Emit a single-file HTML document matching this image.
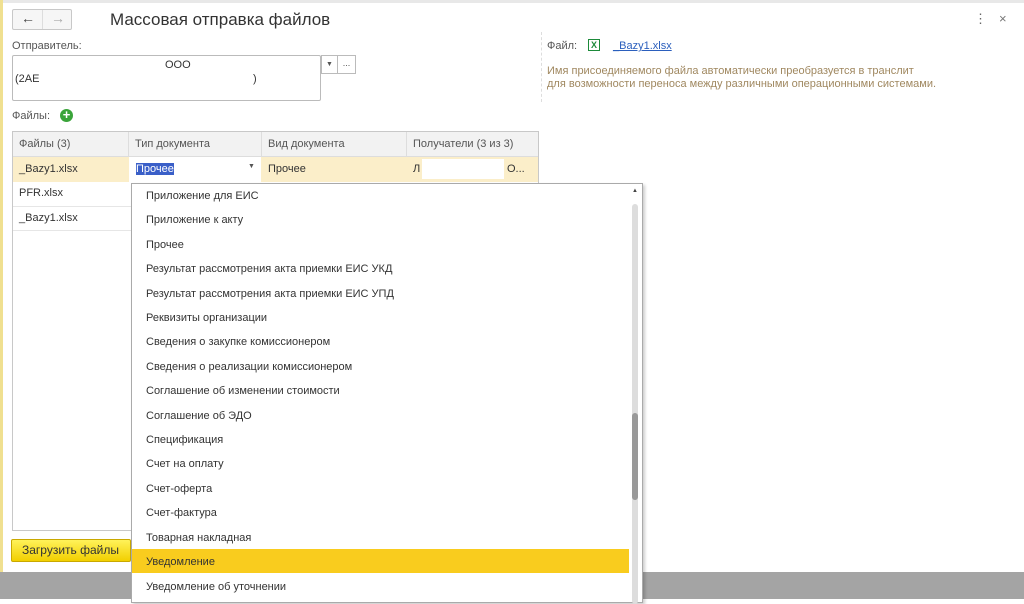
<!DOCTYPE html>
<html><head><meta charset="utf-8"><style>
*{margin:0;padding:0;box-sizing:border-box}
body{width:1024px;height:599px;overflow:hidden;background:#fff;font-family:"Liberation Sans",sans-serif;font-size:11px;color:#333;position:relative}
.a{position:absolute}
.t{position:absolute;white-space:nowrap}
</style></head><body>
<div class="a" style="left:0;top:0;width:1024px;height:3px;background:#e8e8e8"></div>
<div class="a" style="left:0;top:0;width:3px;height:572px;background:#f0e090"></div>
<div class="a" style="left:0;top:572px;width:1024px;height:27px;background:#a4a4a4"></div>
<div class="a" style="left:12px;top:9px;width:60px;height:21px;border:1px solid #c8c8c8;border-radius:2px;background:#f6f6f6"></div>
<div class="a" style="left:42px;top:10px;width:1px;height:19px;background:#ddd"></div>
<div class="t" style="left:21px;top:10px;font-size:14px;color:#444">&#8592;</div>
<div class="t" style="left:51px;top:10px;font-size:14px;color:#aaa">&#8594;</div>
<div class="t" style="left:110px;top:10px;font-size:17px;color:#333">Массовая отправка файлов</div>
<div class="t" style="left:974px;top:11px;font-size:13px;color:#666">&#8942;</div>
<div class="t" style="left:999px;top:11px;font-size:13px;color:#777">×</div>
<div class="t" style="left:12px;top:40px;color:#555">Отправитель:</div>
<div class="a" style="left:12px;top:55px;width:309px;height:46px;border:1px solid #bbb;border-radius:2px"></div>
<div class="t" style="left:165px;top:59px">ООО</div>
<div class="t" style="left:15px;top:73px">(2АЕ</div>
<div class="t" style="left:253px;top:73px">)</div>
<div class="a" style="left:321px;top:55px;width:17px;height:19px;border:1px solid #bbb;font-size:7px;text-align:center;line-height:17px;color:#555">▼</div>
<div class="a" style="left:337px;top:55px;width:19px;height:19px;border:1px solid #bbb;font-size:9px;text-align:center;line-height:15px;color:#555">...</div>
<div class="t" style="left:12px;top:110px;color:#555">Файлы:</div>
<div class="a" style="left:60px;top:109px;width:13px;height:13px;border-radius:50%;background:#3aa43a;color:#fff;font-size:13px;font-weight:bold;line-height:12px;text-align:center">+</div>
<div class="a" style="left:12px;top:131px;width:527px;height:400px;border:1px solid #c8c8c8"></div>
<div class="a" style="left:13px;top:132px;width:525px;height:25px;background:#f2f2f2;border-bottom:1px solid #ddd"></div>
<div class="a" style="left:128px;top:132px;width:1px;height:25px;background:#ddd"></div>
<div class="a" style="left:261px;top:132px;width:1px;height:25px;background:#ddd"></div>
<div class="a" style="left:406px;top:132px;width:1px;height:25px;background:#ddd"></div>
<div class="t" style="left:19px;top:138px;color:#555">Файлы (3)</div>
<div class="t" style="left:135px;top:138px;color:#555">Тип документа</div>
<div class="t" style="left:268px;top:138px;color:#555">Вид документа</div>
<div class="t" style="left:413px;top:138px;color:#555">Получатели (3 из 3)</div>
<div class="a" style="left:13px;top:157px;width:525px;height:25px;background:#fbeec9"></div>
<div class="a" style="left:129px;top:157px;width:132px;height:25px;background:#fff"></div>
<div class="t" style="left:19px;top:163px">_Bazy1.xlsx</div>
<div class="t" style="left:136px;top:163px;background:#3a5fc8;color:#fff">Прочее</div>
<div class="t" style="left:248px;top:163px;font-size:7px;color:#555">▼</div>
<div class="t" style="left:268px;top:163px">Прочее</div>
<div class="t" style="left:413px;top:163px">Л</div>
<div class="a" style="left:422px;top:159px;width:82px;height:20px;background:#fff"></div>
<div class="t" style="left:507px;top:163px">О...</div>
<div class="a" style="left:13px;top:206px;width:119px;height:1px;background:#e6e6e6"></div>
<div class="a" style="left:13px;top:230px;width:119px;height:1px;background:#e6e6e6"></div>
<div class="t" style="left:19px;top:187px">PFR.xlsx</div>
<div class="t" style="left:19px;top:212px">_Bazy1.xlsx</div>
<div class="a" style="left:11px;top:539px;width:120px;height:23px;border:1px solid #c9a800;border-radius:2px;background:linear-gradient(#fff25a,#f2cf00);font-size:12px;color:#333;line-height:21px;padding-left:10px">Загрузить файлы</div>
<div class="a" style="left:541px;top:32px;width:0;height:70px;border-left:1px dashed #ddd"></div>
<div class="t" style="left:547px;top:40px;color:#555">Файл:</div>
<div class="a" style="left:588px;top:39px;width:12px;height:12px;border:1px solid #1d8a3a;color:#1d8a3a;font-size:9px;font-weight:bold;text-align:center;line-height:10px">X</div>
<div class="t" style="left:613px;top:40px;color:#2b5fbd;text-decoration:underline">_Bazy1.xlsx</div>
<div class="t" style="left:547px;top:65px;color:#a08860;line-height:13px">Имя присоединяемого файла автоматически преобразуется в транслит<br>для возможности переноса между различными операционными системами.</div>
<div class="a" style="left:131px;top:183px;width:512px;height:420px;border:1px solid #aaa;background:#fff;box-shadow:2px 2px 3px rgba(0,0,0,.2)"></div>
<div class="a" style="left:132px;top:549px;width:497px;height:24px;background:#f9cc1e"></div>
<div class="t" style="left:632px;top:188px;font-size:6px;color:#444">▲</div>
<div class="a" style="left:632px;top:204px;width:6px;height:400px;background:#ddd;border-radius:3px"></div>
<div class="a" style="left:632px;top:413px;width:6px;height:87px;background:#999;border-radius:3px"></div>
<div class="a" style="left:146px;top:184px;line-height:24.4px;color:#333">
Приложение для ЕИС<br>Приложение к акту<br>Прочее<br>Результат рассмотрения акта приемки ЕИС УКД<br>Результат рассмотрения акта приемки ЕИС УПД<br>Реквизиты организации<br>Сведения о закупке комиссионером<br>Сведения о реализации комиссионером<br>Соглашение об изменении стоимости<br>Соглашение об ЭДО<br>Спецификация<br>Счет на оплату<br>Счет-оферта<br>Счет-фактура<br>Товарная накладная<br>Уведомление<br>Уведомление об уточнении
</div>
</body></html>
